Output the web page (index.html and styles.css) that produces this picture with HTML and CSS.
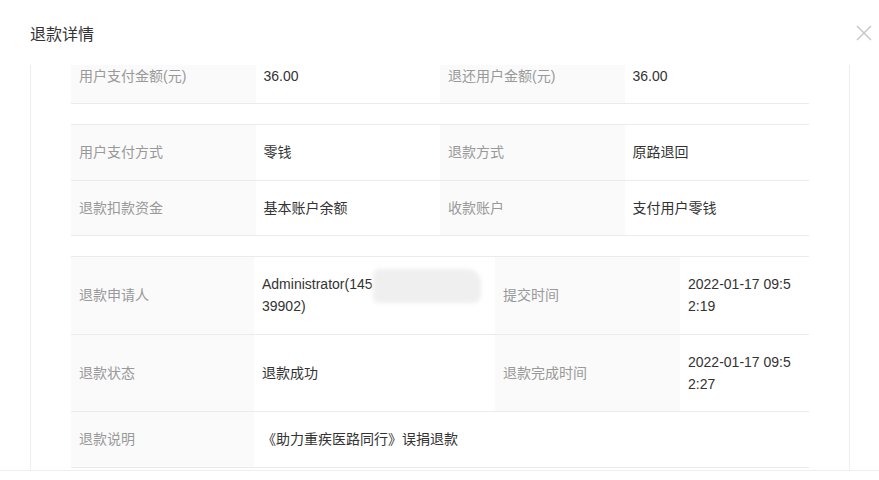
FILE: index.html
```html
<!DOCTYPE html>
<html lang="zh-CN">
<head>
    <meta charset="UTF-8">
    <meta name="viewport" content="width=device-width, initial-scale=1.0">
    <title>退款详情</title>
    <link rel="stylesheet" href="styles.css">
</head>
<body>

    <div class="dialog">
        <div class="dialog-header">
            <span class="dialog-title">退款详情</span>
            <button class="close" aria-label="关闭">
                <svg width="16" height="16" viewBox="0 0 16 16">
                    <path d="M1 1 L15 15 M15 1 L1 15" stroke="#c8c8c8" stroke-width="1.5" fill="none"/>
                </svg>
            </button>
        </div>

        <div class="dialog-body">
            <div class="detail first">
                <div class="row cols4">
                    <div class="label">用户支付金额(元)</div>
                    <div class="value">36.00</div>
                    <div class="label">退还用户金额(元)</div>
                    <div class="value">36.00</div>
                </div>
            </div>

            <div class="detail">
                <div class="row cols4">
                    <div class="label">用户支付方式</div>
                    <div class="value">零钱</div>
                    <div class="label">退款方式</div>
                    <div class="value">原路退回</div>
                </div>
                <div class="row cols4">
                    <div class="label">退款扣款资金</div>
                    <div class="value">基本账户余额</div>
                    <div class="label">收款账户</div>
                    <div class="value">支付用户零钱</div>
                </div>
            </div>

            <div class="detail">
                <div class="row cols-wide">
                    <div class="label">退款申请人</div>
                    <div class="value masked">Administrator(145<br>39902)<span class="mask"></span></div>
                    <div class="label">提交时间</div>
                    <div class="value narrow">2022-01-17 09:52:19</div>
                </div>
                <div class="row cols-wide">
                    <div class="label">退款状态</div>
                    <div class="value">退款成功</div>
                    <div class="label">退款完成时间</div>
                    <div class="value narrow">2022-01-17 09:52:27</div>
                </div>
                <div class="row cols-span">
                    <div class="label">退款说明</div>
                    <div class="value">《助力重疾医路同行》误捐退款</div>
                </div>
            </div>
        </div>

        <div class="dialog-footer"></div>
    </div>

</body>
</html>
```

FILE: styles.css
```css
* {
    box-sizing: border-box;
}

body {
    margin: 0;
    background: #fff;
    font-family: "Liberation Sans", "Noto Sans CJK SC", sans-serif;
    font-size: 14px;
    color: #333;
}

.dialog {
    width: 879px;
    height: 480px;
    overflow: hidden;
    background: #fff;
}

.dialog-header {
    height: 65px;
    display: flex;
    align-items: center;
    justify-content: space-between;
    padding: 0 7px 0 30px;
}

.dialog-title {
    font-size: 16px;
    color: #333;
}

.close {
    border: 0;
    background: none;
    padding: 0;
    width: 16px;
    height: 16px;
    display: flex;
}

/* scrolling area, already scrolled a little */
.dialog-body {
    height: 405px;
    margin: 0 29px 0 30px;
    padding: 0 40px;
    border-left: 1px solid #eee;
    border-right: 1px solid #eee;
    overflow: hidden;
}

.dialog-footer {
    border-top: 1px solid #eee;
    height: 10px;
}

.detail {
    border-top: 1px solid #ebebeb;
    margin-bottom: 20px;
}

.detail.first {
    margin-top: -17.5px;
}

.row {
    display: grid;
    border-bottom: 1px solid #ebebeb;
}

.cols4 {
    grid-template-columns: 25% 25% 25% 25%;
}

.cols-wide {
    grid-template-columns: 183px 241px 185px 1fr;
}

.cols-span {
    grid-template-columns: 183px 1fr;
}

.label,
.value {
    padding: 16.25px 8px;
    line-height: 22px;
    display: flex;
    align-items: center;
}

.label {
    background: #fafafa;
    color: #999;
}

.value {
    color: #333;
}

.narrow {
    word-break: break-all;
}

.masked {
    position: relative;
    display: block;
}

/* blurred phone number */
.mask {
    position: absolute;
    left: 119px;
    top: 12px;
    width: 108px;
    height: 34px;
    background: #efefef;
    border-radius: 6px 14px 8px 6px;
    filter: blur(2px);
}
```
